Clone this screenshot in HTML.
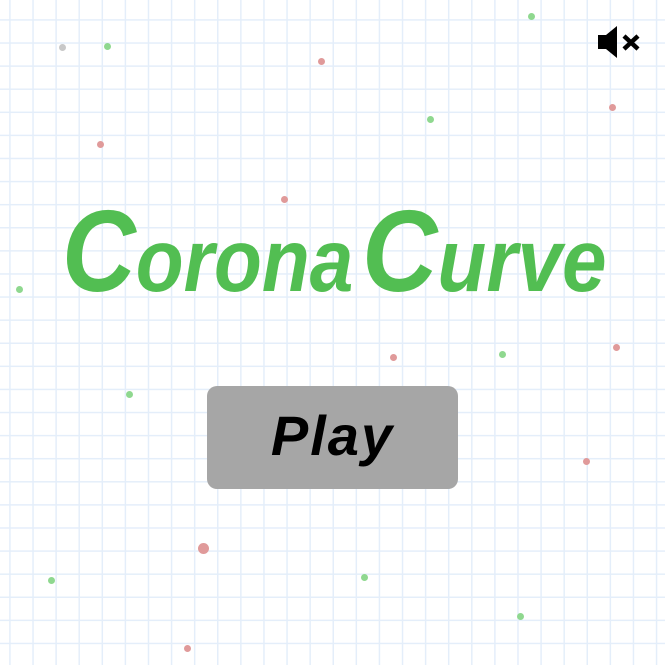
<!DOCTYPE html>
<html><head><meta charset="utf-8"><style>
html,body{margin:0;padding:0}
body{width:665px;height:665px;position:relative;overflow:hidden;background-color:#fff;
background-image:linear-gradient(to right,#e4eefa 1.6px,transparent 1.6px),linear-gradient(to bottom,#e4eefa 1.6px,transparent 1.6px);
background-size:23.1px 23.1px;background-position:9.2px 19.2px;font-family:"Liberation Sans",sans-serif}
.d{position:absolute;width:7px;height:7px;border-radius:50%;margin:-3.5px 0 0 -3.5px}
.g{background:#8fd88f}.r{background:#e09a9a}
.t{position:absolute;color:#52be52;font-weight:bold;font-style:italic;white-space:nowrap;line-height:1}
.big{font-size:116px}.sm{font-size:89px}
.btn{position:absolute;left:207px;top:386px;width:251px;height:103px;background:#a6a6a6;border-radius:10px}
.play{position:absolute;left:0;right:0;top:22px;text-align:center;font-size:56px;font-weight:bold;font-style:italic;letter-spacing:2px;color:#000;line-height:1}
</style></head><body>
<div class="d g" style="left:107px;top:46px"></div>
<div class="d" style="left:62px;top:47px;background:#c8c8c8"></div>
<div class="d g" style="left:531px;top:16px"></div>
<div class="d g" style="left:430px;top:119px"></div>
<div class="d g" style="left:19px;top:289px"></div>
<div class="d g" style="left:502px;top:354px"></div>
<div class="d g" style="left:129px;top:394px"></div>
<div class="d g" style="left:51px;top:580px"></div>
<div class="d g" style="left:364px;top:577px"></div>
<div class="d g" style="left:520px;top:616px"></div>
<div class="d r" style="left:321px;top:61px"></div>
<div class="d r" style="left:612px;top:107px"></div>
<div class="d r" style="left:100px;top:144px"></div>
<div class="d r" style="left:284px;top:199px"></div>
<div class="d r" style="left:393px;top:357px"></div>
<div class="d r" style="left:616px;top:347px"></div>
<div class="d r" style="left:586px;top:461px"></div>
<div class="d r" style="left:203px;top:548px;width:11px;height:11px;margin:-5.5px 0 0 -5.5px"></div>
<div class="d r" style="left:187px;top:648px"></div>

<div class="t" style="left:62px;top:193px;transform-origin:0 0;transform:scaleX(0.88)"><span class="big">C</span><span class="sm">orona</span></div>
<div class="t" style="left:362px;top:193px;transform-origin:0 0;transform:scaleX(0.9)"><span class="big">C</span><span class="sm">urve</span></div>

<div class="btn"><div class="play">Play</div></div>

<svg style="position:absolute;left:597px;top:25px" width="46" height="34" viewBox="0 0 46 34">
<path d="M1 10H9L20 1V33L9 24H1Z" fill="#000"/>
<path d="M27 11L41 24M41 11L27 24" stroke="#000" stroke-width="4.5"/>
</svg>
</body></html>
